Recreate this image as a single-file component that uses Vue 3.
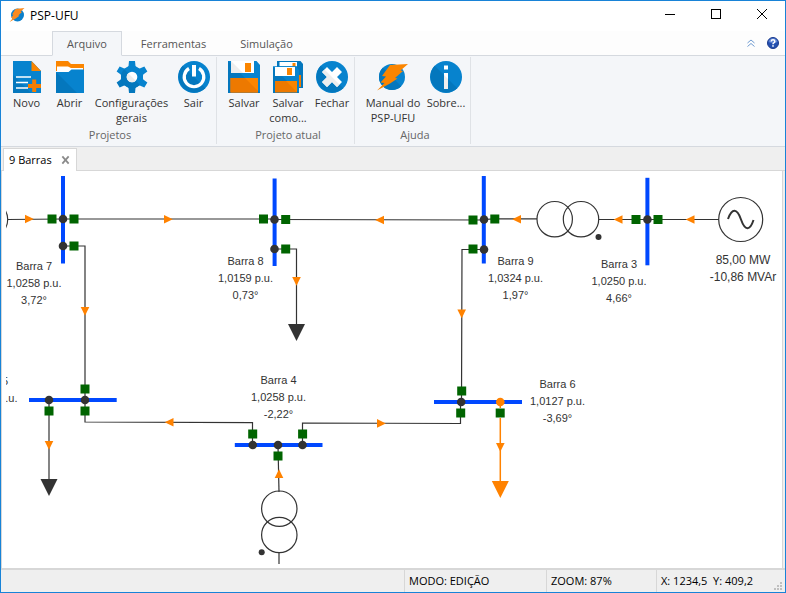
<script setup>
import { ref } from 'vue'

const ribbonTabs = ['Arquivo', 'Ferramentas', 'Simulação']
const activeTab = ref('Arquivo')

const groups = [
  {
    name: 'Projetos',
    kind: 'projects',
    items: [
      { icon: 'new', label: 'Novo' },
      { icon: 'open', label: 'Abrir' },
      { icon: 'gear', label: 'Configurações\ngerais', size: 'wide' },
      { icon: 'power', label: 'Sair' }
    ]
  },
  {
    name: 'Projeto atual',
    kind: 'current',
    items: [
      { icon: 'save', label: 'Salvar' },
      { icon: 'saveas', label: 'Salvar\ncomo...' },
      { icon: 'close', label: 'Fechar' }
    ]
  },
  {
    name: 'Ajuda',
    kind: 'support',
    items: [
      { icon: 'manual', label: 'Manual do\nPSP-UFU', size: 'medium' },
      { icon: 'info', label: 'Sobre...' }
    ]
  }
]

const wires = [
  'M8 219.500L63 219', 'M63 219H274.500', 'M274.500 219.500L484 220', 'M484 219.500L494 218.800H537',
  'M599 219.500H719', 'M63 246H85V400', 'M274.500 249H296.500V325', 'M484 249.500H462L461.500 402',
  'M49 400V480', 'M85 400V422L252.500 422.700V445', 'M302.500 445V423L460.500 423.500V402',
  'M278 445L279 492', 'M279 552V564'
]

const buses = [
  [61, 176, 4, 87.5], [272.6, 178.5, 4, 87.5], [481.8, 176, 4, 87.5], [645.4, 177.8, 4, 87.5],
  [29, 398, 87.7, 4], [234.8, 443, 87.7, 4], [434, 400, 88, 4]
]

const breakers = [
  [52, 219], [74, 219], [74, 246], [263.5, 219], [285.7, 219.500], [285.7, 249],
  [473, 220], [494.8, 219], [473, 249], [636, 219.5], [658, 219.5],
  [85, 389], [49, 411], [85, 411], [252.7, 434], [302.6, 434], [278, 456],
  [461.7, 391], [460.7, 413], [500.2, 413]
]

const nodes = [
  [63, 219], [63, 246], [274.500, 219.500], [274.500, 249], [484, 219.500], [484, 249.500],
  [647.4, 219.500], [49, 400], [85, 400], [252.7, 445], [278, 445], [302.5, 445], [461.2, 402]
]

const flows = [
  [29.5, 219, 0], [168.5, 219.3, 0], [379.5, 220, 180], [516.5, 219.3, 180], [618, 219.500, 180],
  [690, 219.500, 180], [85, 311.500, 90], [296.500, 281.500, 90], [461.7, 314, 90], [49, 445.500, 90],
  [169, 422.300, 180], [381.500, 423.400, 0], [279, 473.500, 270], [500.300, 447.500, 90]
]

const labels = [
  { x: 34, y: 270, lines: ['Barra 7', '1,0258 p.u.', '3,72°'] },
  { x: 245.5, y: 265, lines: ['Barra 8', '1,0159 p.u.', '0,73°'] },
  { x: 515.5, y: 265, lines: ['Barra 9', '1,0324 p.u.', '1,97°'] },
  { x: 619, y: 268, lines: ['Barra 3', '1,0250 p.u.', '4,66°'] },
  { x: 743, y: 264, kind: 'power', lines: ['85,00 MW', '-10,86 MVAr'] },
  { x: 278.500, y: 384, lines: ['Barra 4', '1,0258 p.u.', '-2,22°'] },
  { x: 557.5, y: 388, lines: ['Barra 6', '1,0127 p.u.', '-3,69°'] },
  { x: -10, y: 385, lines: ['Barra 5', '0,9956 p.u.'] }
]
</script>

<template>
  <div class="window">
    <header class="titlebar">
      <svg class="logo" viewBox="0 0 32 32" aria-hidden="true">
        <circle cx="17" cy="16" r="13" fill="#0a7fcb" />
        <path d="M13 4L31 2L23 9.500L26 10L18.500 17L21 17.500L13.500 23L1 30L7.500 22.500L4 22L9 15.500L6 15Z" fill="#fa8a1e" />
      </svg>
      <h1>PSP-UFU</h1>
      <div class="caption">
        <button aria-label="Minimizar"><svg viewBox="0 0 12 12"><path d="M1 5.500H11" /></svg></button>
        <button aria-label="Maximizar"><svg viewBox="0 0 12 12"><rect x="1.500" y="0.500" width="9" height="9" /></svg></button>
        <button aria-label="Fechar janela"><svg viewBox="0 0 12 12"><path d="M1 0L11 10M11 0L1 10" /></svg></button>
      </div>
    </header>

    <nav class="ribbon-tabs">
      <button
        v-for="tab in ribbonTabs"
        :key="tab"
        class="ribbon-tab"
        :class="{ active: tab === activeTab }"
        @click="activeTab = tab"
      >{{ tab }}</button>
      <span class="tools">
        <button aria-label="Recolher"><svg class="chevrons" viewBox="0 0 8 8"><path d="M0.500 4L4 1L7.500 4M0.500 7.500L4 4.500L7.500 7.500" /></svg></button>
        <button aria-label="Ajuda">
          <svg class="help" viewBox="0 0 12 12">
            <circle cx="6" cy="6" r="5.500" fill="#2450b0" stroke="#1b3a8c" />
            <path d="M1.500 5A4.600 4.600 0 0 1 10.500 5Q6 7 1.500 5Z" fill="#5d83d3" />
            <path d="M4.200 4.500Q4.300 2.800 6 2.800T7.800 4.400Q7.800 5.300 6.800 5.800Q6 6.200 6 7.200" fill="none" stroke="#fff" stroke-width="1.500" />
            <rect x="5.200" y="8.200" width="1.600" height="1.500" fill="#fff" />
          </svg>
        </button>
      </span>
    </nav>

    <div class="ribbon">
      <section v-for="group in groups" :key="group.name" class="group" :class="group.kind">
        <div class="actions">
          <button v-for="item in group.items" :key="item.icon" class="action" :class="item.size">
            <svg class="icon" viewBox="0 0 32 32" aria-hidden="true">
              <template v-if="item.icon === 'new'">
                <path d="M2 0H20.500L30 10V32H2Z" fill="#0783ce" />
                <path d="M2 14L20 32H2Z" fill="#0477bd" />
                <path d="M20.500 0L30 10H20.500Z" fill="#fb8500" />
                <path d="M5 16H20M5 21.500H17M5 27H17" stroke="#fff" stroke-width="1.600" />
                <path d="M21.200 18.500H25.200V23H30V27H25.200V31H21.200V27H17V23H21.200Z" fill="#f47d00" />
              </template>
              <template v-else-if="item.icon === 'open'">
                <path d="M2 0H14L17 3H30V10H2Z" fill="#fb8500" />
                <path d="M3 5.500H14L17 7H29V13H3Z" fill="#fff" />
                <path d="M2 11H14.500L17.500 8.500H30V32H2Z" fill="#0783ce" />
                <path d="M2 11L23 32H2Z" fill="#0477bd" />
              </template>
              <template v-else-if="item.icon === 'gear'">
                <circle cx="16" cy="16" r="11" fill="#0783ce" />
                <path
                  v-for="angle in [0, 60, 120, 180, 240, 300]"
                  :key="angle"
                  d="M10.500 7L12.500 5L13 0H19L19.500 5L21.500 7Z"
                  :transform="`rotate(${angle} 16 16)`"
                  :fill="angle > 120 && angle < 300 ? '#0477bd' : '#0783ce'"
                />
                <path d="M8.200 8.200A11 11 0 0 0 23.800 23.800Z" fill="#0477bd" />
                <circle cx="16" cy="16" r="5.300" fill="#fff" />
                <path d="M12.200 12.200A5.300 5.300 0 0 0 19.800 19.800Z" fill="#ededed" />
              </template>
              <template v-else-if="item.icon === 'power'">
                <circle cx="16" cy="16" r="16" fill="#0783ce" />
                <path d="M4.700 4.700A16 16 0 0 0 27.300 27.300Z" fill="#0477bd" />
                <path d="M11 7.500A9.800 9.800 0 1 0 21 7.500" fill="none" stroke="#fff" stroke-width="3.200" />
                <path d="M16 4V15.500" stroke="#fff" stroke-width="4" />
              </template>
              <template v-else-if="item.icon === 'save'">
                <path d="M0 0H28.500L32 4V32H0Z" fill="#0783ce" />
                <path d="M0 0L32 32H0Z" fill="#0477bd" />
                <path d="M3 0H26V12H3Z" fill="#fff" />
                <path d="M3 0L15 12H3Z" fill="#eee" />
                <path d="M17 2H23V11H17Z" fill="#fb8500" />
                <path d="M2.500 17H30V31.500H2.500Z" fill="#fb8500" />
                <path d="M2.500 17H17L30 30V31.500H2.500Z" fill="#ed7900" />
              </template>
              <template v-else-if="item.icon === 'saveas'">
                <path d="M5 0H28.500L31 3V27H5Z" fill="#0477bd" />
                <path d="M7.500 1H25V5.300H7.500Z" fill="#fff" />
                <path d="M20.500 2H23.500V5.300H20.500Z" fill="#fb8500" />
                <path d="M26.500 14H29V26H26.500Z" fill="#ed7900" />
                <path d="M1 5.300H24L27 9V32H1Z" fill="#0783ce" />
                <path d="M1 6L27 32H1Z" fill="#0477bd" />
                <path d="M3 6H23V15H3Z" fill="#fff" />
                <path d="M15 7H20V14H15Z" fill="#fb8500" />
                <path d="M3 20H25V31.300H3Z" fill="#fb8500" />
                <path d="M3 20H14L25 31.300H3Z" fill="#ed7900" />
              </template>
              <template v-else-if="item.icon === 'close'">
                <circle cx="16" cy="16" r="16" fill="#0783ce" />
                <path d="M4.700 4.700A16 16 0 0 0 27.300 27.300Z" fill="#0477bd" />
                <path d="M11 6L16 11L21 6L26 11L21 16L26 21L21 26L16 21L11 26L6 21L11 16L6 11Z" fill="#fff" />
                <path d="M8.500 8.500L23.500 23.500L21 26L16 21L11 26L6 21L11 16L6 11Z" fill="#eee" />
              </template>
              <template v-else-if="item.icon === 'manual'">
                <circle cx="15" cy="16" r="13" fill="#0783ce" />
                <path d="M5.800 6.800A13 13 0 0 0 24.200 25.200Z" fill="#0477bd" />
                <path d="M13 4L31 3L23.500 9.500L26 10L18 17L20.500 17.500L13 22.500L0 29.500L7.500 22L3.500 21.500L9 15.500L5 15Z" fill="#fb8500" />
              </template>
              <template v-else>
                <circle cx="16" cy="16" r="16" fill="#0783ce" />
                <path d="M4.700 4.700A16 16 0 0 0 27.300 27.300Z" fill="#0477bd" />
                <path d="M14 4.500H18V8.500H14ZM14 12H18V28H14Z" fill="#fff" />
                <path d="M14 14L18 18V28H14Z" fill="#eee" />
              </template>
            </svg>
            <span>{{ item.label }}</span>
          </button>
        </div>
        <h2>{{ group.name }}</h2>
      </section>
    </div>

    <div class="documents">
      <div class="document-tab">
        <span>9 Barras</span>
        <button aria-label="Fechar 9 Barras"><svg viewBox="0 0 10 10"><path d="M1.500 1L8.500 9M8.500 1L1.500 9" /></svg></button>
      </div>
    </div>

    <main class="canvas">
      <svg class="diagram" width="776" height="393" viewBox="6 171 776 393">
        <path v-for="(d, i) in wires" :key="'w' + i" :d="d" class="wire" />
        <g class="wire">
          <circle cx="-10" cy="219.500" r="17.700" />
          <circle cx="554.700" cy="219.200" r="17.700" />
          <circle cx="581" cy="219.200" r="17.700" />
          <circle cx="740.700" cy="219.500" r="22" />
          <circle cx="279.300" cy="508.700" r="17.700" />
          <circle cx="279.300" cy="535" r="17.700" />
        </g>
        <path d="M728 219C732 208 737 208 741 219.500S750 231 753.500 220" class="wave" />
        <rect v-for="(b, i) in buses" :key="'b' + i" :x="b[0]" :y="b[1]" :width="b[2]" :height="b[3]" fill="#0048ff" />
        <rect v-for="(b, i) in breakers" :key="'s' + i" :x="b[0] - 4.500" :y="b[1] - 4.500" width="9" height="9" fill="#006400" />
        <circle v-for="(n, i) in nodes" :key="'n' + i" :cx="n[0]" :cy="n[1]" r="4.300" fill="#333" />
        <circle cx="598.500" cy="237" r="3" fill="#333" />
        <circle cx="261.700" cy="552.300" r="3" fill="#333" />
        <path d="M288 324H305L296.500 341ZM40.500 479H57.500L49 496Z" fill="#333" />
        <path d="M500.300 402V408M500.300 418V482" stroke="#ff8200" stroke-width="1.500" />
        <circle cx="500.300" cy="402" r="4.300" fill="#ff8200" />
        <path d="M491.800 481H508.800L500.300 498Z" fill="#ff8200" />
        <path
          v-for="(f, i) in flows"
          :key="'f' + i"
          d="M-4.500 -4.300L4.300 0L-4.500 4.300Z"
          :transform="`translate(${f[0]} ${f[1]}) rotate(${f[2]})`"
          fill="#ff8200"
        />
        <text v-for="(l, i) in labels" :key="'t' + i" class="label" :class="l.kind">
          <tspan v-for="(line, j) in l.lines" :key="j" :x="l.x" :y="l.y + j * 17">{{ line }}</tspan>
        </text>
      </svg>
    </main>

    <footer class="status">
      <span class="mode">MODO: EDIÇÃO</span>
      <span class="zoom">ZOOM: 87%</span>
      <span class="position">X: 1234,5&nbsp; Y: 409,2</span>
      <svg class="grip" viewBox="0 0 8 8" aria-hidden="true">
        <path d="M6 0h2v2h-2zM3 3h2v2h-2zM6 3h2v2h-2zM0 6h2v2h-2zM3 6h2v2h-2zM6 6h2v2h-2z" fill="#bfbfbf" />
      </svg>
    </footer>
  </div>
</template>

<style>
body { margin: 0; }
</style>

<style scoped>
* { box-sizing: border-box; }
.window {
  display: flex;
  flex-direction: column;
  min-height: 100vh;
  border: 1px solid #1883d7;
  background: #efefef;
  color: #000;
  font: 11px/15px "Open Sans", "Noto Sans", sans-serif;
}
button {
  padding: 0;
  border: 0;
  background: none;
  color: inherit;
  font: inherit;
}
h1, h2 { margin: 0; font: inherit; }
svg { display: block; }

.titlebar {
  display: flex;
  align-items: center;
  height: 30px;
  padding: 0 0 2px 8px;
  background: #fff;
}
.logo { width: 16px; height: 16px; }
h1 { margin-left: 5px; font-size: 12px; }
.caption { display: flex; margin-left: auto; }
.caption button { display: grid; place-items: center; width: 46px; height: 28px; }
.caption svg { width: 12px; height: 12px; fill: none; stroke: #000; }

.ribbon-tabs {
  display: flex;
  height: 25px;
  padding-left: 51px;
  background: #fdfdfd;
  border-bottom: 1px solid #d5d9df;
}
.ribbon-tab {
  height: 25px;
  padding: 0 14px;
  margin-right: 4px;
  border: 1px solid transparent;
  color: #555;
}
.ribbon-tab.active { background: #f4f6f9; border-color: #d5d9df #d5d9df #f4f6f9; }
.tools { display: flex; align-items: center; gap: 12px; margin-left: auto; padding-right: 6px; }
.chevrons { width: 8px; height: 8px; fill: none; stroke: #6f9bd1; }
.help { width: 12px; height: 12px; }

.ribbon {
  display: flex;
  min-height: 91px;
  padding: 1px 0 2px;
  background: #f4f6f9;
  border-bottom: 1px solid #d5d9df;
}
.group { border-right: 1px solid #dfe2e6; color: #333; }
.projects { padding: 0 1px 0 4px; }
.projects .action { width: 43px; }
.current { padding-left: 5px; }
.support { padding: 0 2px 0 7px; }
.actions { display: flex; align-items: flex-start; height: 70px; padding-top: 4px; }
.action { width: 44px; white-space: pre; }
.projects .action.wide { width: 81px; }
.action.medium { width: 62px; }
.action span { display: flex; justify-content: center; margin-top: 2px; }
.icon { width: 32px; height: 32px; margin: 0 auto; }
h2 { text-align: center; color: #666; }

.documents {
  display: flex;
  align-items: flex-end;
  height: 24px;
  padding-left: 2px;
  border-bottom: 1px solid #d7d7d7;
}
.document-tab {
  display: flex;
  align-items: center;
  gap: 9px;
  height: 23px;
  margin-bottom: -1px;
  padding: 0 6px 1px 5px;
  background: #fff;
  border: 1px solid #d7d7d7;
  border-bottom: 0;
}
.document-tab svg { width: 9px; height: 10px; fill: none; stroke: #8b8b8b; stroke-width: 2; }

.canvas {
  flex: 1;
  margin-right: 2px;
  padding-left: 4px;
  overflow: hidden;
  background: #fff;
  border-left: 1px solid #d7d7d7;
  border-right: 1px solid #d7d7d7;
}
.wire { fill: none; stroke: #333; stroke-width: 1.2px; }
.wave { fill: none; stroke: #333; stroke-width: 2px; }
.label {
  fill: #333;
  font-family: "Liberation Sans", Arial, sans-serif;
  font-size: 11px;
  text-anchor: middle;
}
.label.power { font-size: 12px; }

.status {
  display: flex;
  align-items: stretch;
  justify-content: flex-end;
  height: 24px;
  border-top: 2px solid #d7d7d7;
  line-height: 22px;
}
.status span { padding-left: 4px; border-left: 1px solid #d7d7d7; }
.mode { width: 142px; }
.zoom { width: 110px; }
.position { width: 118px; }
.grip { width: 8px; height: 8px; margin: 12px 3px 0 0; }
</style>
